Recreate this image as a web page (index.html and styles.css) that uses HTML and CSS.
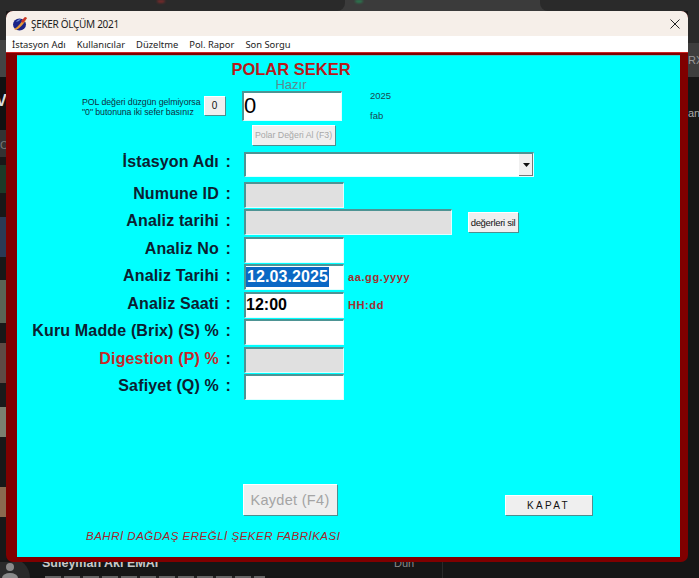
FILE: index.html
```html
<!DOCTYPE html>
<html lang="tr">
<head>
<meta charset="utf-8">
<title>ŞEKER ÖLÇÜM 2021</title>
<link rel="stylesheet" href="styles.css">
</head>
<body>
<div class="desktop">
  <div class="bg-top"><i class="tab-a"></i><i class="tab-b"></i><i class="dot dot-r"></i><i class="dot dot-g"></i></div>
  <div class="bg-left"></div>
  <div class="bg-right"></div>
  <span class="bg-text glyph-v">V</span>
  <span class="bg-text glyph-c">C</span>
  <span class="bg-text rx">RX</span>
  <span class="bg-text an">an</span>
  <svg class="avatar" width="30" height="16" viewBox="0 0 30 16"><circle cx="10" cy="16" r="20" fill="#2a2a2a"/><circle cx="10" cy="5" r="4" fill="#8a8a8a"/><ellipse cx="10" cy="16" rx="8" ry="5" fill="#8a8a8a"/></svg>
  <span class="bg-name">Süleyman Akı EMAI</span>
  <span class="bg-day">Dün</span>
  <i class="bg-sub"></i>
  <i class="bg-rule"></i>

  <div class="window">
    <header class="titlebar">
      <svg class="appicon" width="14" height="15" viewBox="0 0 14 15"><ellipse cx="6.500" cy="8.500" rx="6.500" ry="6" fill="#1a2488"/><path d="M1 13 C5 11 8 7 12 1 L14 2 C11 8 7 12 3 14Z" fill="#e39a3a"/><path d="M8 5 L12 1 L14 2 L10 7Z" fill="#c8322a"/><path d="M3 6 C4 4 6 3 8 3 L6 5Z" fill="#6d8fd8"/></svg>
      <span class="title">ŞEKER ÖLÇÜM 2021</span>
      <svg class="close" width="10" height="10" viewBox="0 0 10 10"><path d="M.5.5l9 9M9.500.5l-9 9" stroke="#222" stroke-width="1"/></svg>
    </header>
    <nav class="menubar">
      <span>İstasyon Adı</span><span>Kullanıcılar</span><span>Düzeltme</span><span>Pol. Rapor</span><span>Son Sorgu</span>
    </nav>
    <main class="form">
      <div class="head">
        <h1 class="polar">POLAR SEKER</h1>
        <div class="hazir">Hazır</div>
      </div>
      <div class="pol">
        <p class="note">POL değeri düzgün gelmiyorsa<br>"0" butonuna iki sefer basınız</p>
        <button class="btn zero">0</button>
        <div class="field big">0</div>
        <div class="dates"><span>2025</span><span>fab</span></div>
      </div>
      <button class="btn polbtn" disabled>Polar Değeri Al (F3)</button>
      <div class="rows">
        <label class="lab first">İstasyon Adı <span class="c">:</span></label>
        <div class="field combo"><span class="arrow"><svg width="7" height="4" viewBox="0 0 7 4"><path d="M0 0h7L3.500 4z" fill="#111"/></svg></span></div>
        <label class="lab">Numune ID <span class="c">:</span></label>
        <div class="field off"></div>
        <label class="lab">Analiz tarihi <span class="c">:</span></label>
        <div class="line"><div class="field off wide"></div><button class="btn sil">değerleri sil</button></div>
        <label class="lab">Analiz No <span class="c">:</span></label>
        <div class="field"></div>
        <label class="lab">Analiz Tarihi <span class="c">:</span></label>
        <div class="line"><div class="field val"><span class="sel">12.03.2025</span></div><span class="hint">aa.gg.yyyy</span></div>
        <label class="lab">Analiz Saati <span class="c">:</span></label>
        <div class="line"><div class="field val">12:00</div><span class="hint">HH:dd</span></div>
        <label class="lab">Kuru Madde (Brix) (S) % <span class="c">:</span></label>
        <div class="field"></div>
        <label class="lab red">Digestion (P) % <span class="c">:</span></label>
        <div class="field off"></div>
        <label class="lab">Safiyet (Q) % <span class="c">:</span></label>
        <div class="field"></div>
      </div>
      <div class="actions">
        <button class="btn kaydet" disabled>Kaydet (F4)</button>
        <button class="btn kapat">KAPAT</button>
      </div>
      <footer class="brand">BAHRİ DAĞDAŞ EREĞLİ ŞEKER FABRİKASI</footer>
    </main>
  </div>
</div>
</body>
</html>
```
FILE: styles.css
```css
* { box-sizing: border-box; }
html, body { margin: 0; padding: 0; }
body { width: 699px; height: 578px; overflow: hidden; background: #161616; font-family: "Liberation Sans", Arial, sans-serif; }
.desktop { position: relative; width: 699px; height: 578px; overflow: hidden; background: #161616; }

.bg-top { position: absolute; left: 0; top: 0; width: 699px; height: 11px; background: #3b3b3b; }
.bg-top i { position: absolute; display: block; }
.tab-a { left: 0; top: 0; width: 345px; height: 11px; background: #2a2a2a; border-radius: 0 0 8px 0; }
.tab-b { left: 540px; top: 0; width: 159px; height: 11px; background: #2a2a2a; border-radius: 0 0 0 8px; }
.dot { top: 0; width: 8px; height: 3px; border-radius: 0 0 4px 4px; filter: blur(1px); }
.dot-r { left: 157px; background: #7a2a2a; }
.dot-g { left: 355px; background: #2a7a50; }

.bg-left { position: absolute; left: 0; top: 11px; width: 6px; height: 549px; filter: blur(.6px);
  background: linear-gradient(to bottom,
    #2a2a2a 0 29px, #444 29px 66px, #111 66px 119px, #333 119px 146px, #181818 146px 154px,
    #1c3a28 154px 182px, #181818 182px 206px, #2a3a55 206px 246px, #181818 246px 269px,
    #5a6455 269px 312px, #181818 312px 332px, #5e4a44 332px 372px, #1a1a1a 372px 396px,
    #7a8070 396px 426px, #181818 426px 476px, #8a6a50 476px 506px, #181818 506px 549px); }
.bg-right { position: absolute; left: 688px; top: 11px; width: 11px; height: 66px;
  background: linear-gradient(to bottom, #2a2a2a 0 32px, #3e3e3e 32px 66px); }

.bg-text { position: absolute; color: #aaa; font-size: 11px; line-height: 14px; }
.glyph-v { left: -4px; top: 94px; font-size: 16px; font-weight: bold; color: #ddd; }
.glyph-c { left: 0; top: 138px; font-size: 11px; color: #777; }
.rx { left: 688px; top: 53px; color: #999; }
.an { left: 688px; top: 106px; }
.avatar { position: absolute; left: 0; top: 562px; }
.bg-name { position: absolute; left: 42px; top: 556px; font-size: 12.500px; font-weight: bold; color: #c8c8c8; }
.bg-day { position: absolute; left: 394px; top: 557px; font-size: 11px; color: #8a8a8a; }
.bg-sub { position: absolute; left: 45px; top: 576px; width: 220px; height: 2px; background: repeating-linear-gradient(to right, #666 0 16px, #222 16px 19px); filter: blur(.5px); }
.bg-rule { position: absolute; left: 442px; top: 562px; width: 1px; height: 16px; background: #2a2a2a; }

.window { position: absolute; left: 6px; top: 11px; width: 682px; height: 551px; background: #800000; border-radius: 7px; overflow: hidden; display: flex; flex-direction: column; }
.titlebar { height: 25px; background: #f6efe9; display: flex; align-items: center; padding: 0 8px 0 7px; }
.appicon { margin-right: 4px; }
.title { font-family: "Noto Sans", sans-serif; font-size: 10px; letter-spacing: -.3px; color: #1b1b1b; flex: 1; }
.menubar { height: 17px; background: #fff; display: flex; gap: 11px; padding: 1px 0 0 6px; align-items: center; font-family: "Noto Sans", sans-serif; font-size: 9.400px; color: #222; border-bottom: 1px solid #c22; }

.form { margin: 2px 8px 5px 11px; flex: 1; background: #00ffff; box-shadow: inset 0 1px 0 #40c8c8; display: flex; flex-direction: column; }
.head { height: 36px; margin-left: 211px; width: 126px; text-align: center; padding-top: 6px; }
.polar { margin: 0; font-size: 16.500px; line-height: 16px; font-weight: bold; color: #b81a1a; white-space: nowrap; }
.hazir { font-size: 13px; line-height: 13px; color: #5a8a90; margin-top: 1px; }

.field { width: 100px; height: 26px; background: #fff; border-top: 2px solid #4e9494; border-left: 2px solid #4e9494; border-right: 1px solid #e0ffff; border-bottom: 1px solid #e0ffff; }
.off { background: #e0e0e0; }
.wide { width: 208px; }
.big { height: 30px; margin-left: 17px; font-size: 22px; line-height: 25px; color: #000; }

.btn { font-family: "Liberation Sans", Arial, sans-serif; background: #efefef; border: 0; padding: 0; box-shadow: inset 1px 1px 0 #fff, 1px 1px 0 #4f8f8f; color: #111; }
.pol { display: flex; align-items: flex-start; }
.note { margin: 6px 0 0 65px; width: 122px; font-size: 8.800px; line-height: 10px; color: #10303f; letter-spacing: -.07px; white-space: nowrap; }
.zero { width: 21px; height: 19px; margin: 5px 0 0 0; font-size: 10px; }
.dates { display: flex; flex-direction: column; gap: 10px; margin-left: 28px; font-size: 9.500px; line-height: 10px; color: #1a4a50; }
.polbtn { width: 83px; height: 20px; margin: 4px 0 0 235px; font-size: 8.800px; color: #a8a8a8; }

.rows { display: grid; grid-template-columns: 227px auto; justify-content: start; margin-top: 7px; row-gap: 1.500px; }
.rows > .field, .rows .line { justify-self: start; }
.lab { font-size: 16px; font-weight: bold; color: #0c2030; text-align: right; white-space: nowrap; padding-right: 13px; line-height: 24px; letter-spacing: .15px; }
.lab.first { margin-top: -2px; }
.c { margin-left: 2px; }
.lab.red { color: #c62828; }
.lab.red .c { color: #0c2030; }
.line { display: flex; align-items: center; }
.combo { width: 290px; height: 25px; margin-bottom: 3px; display: flex; justify-content: flex-end; }
.arrow { width: 14px; background: #f0f0f0; display: flex; align-items: center; justify-content: center; box-shadow: inset -1px -1px 0 #777; }
.sil { width: 50px; height: 20px; margin-left: 16px; font-size: 9.500px; letter-spacing: -.3px; }
.val { font-size: 16px; font-weight: bold; color: #000; padding-top: 1px; line-height: 20px; }
.sel { background: #0a68c4; color: #fff; display: inline-block; padding: 0 1px; letter-spacing: .1px; }
.hint { margin-left: 4px; font-size: 11px; font-weight: bold; color: #a03030; letter-spacing: .6px; }

.actions { display: flex; align-items: flex-end; margin: 84px 0 0 226px; }
.kaydet { width: 94px; height: 31px; font-size: 14.500px; color: #a4a4a4; letter-spacing: .3px; }
.kapat { width: 87px; height: 20px; margin-left: 168px; font-size: 10px; letter-spacing: 2.300px; }
.brand { margin: 15px 0 0 69px; font-size: 11.500px; font-style: italic; color: #a8242a; white-space: nowrap; letter-spacing: .5px; }
```
